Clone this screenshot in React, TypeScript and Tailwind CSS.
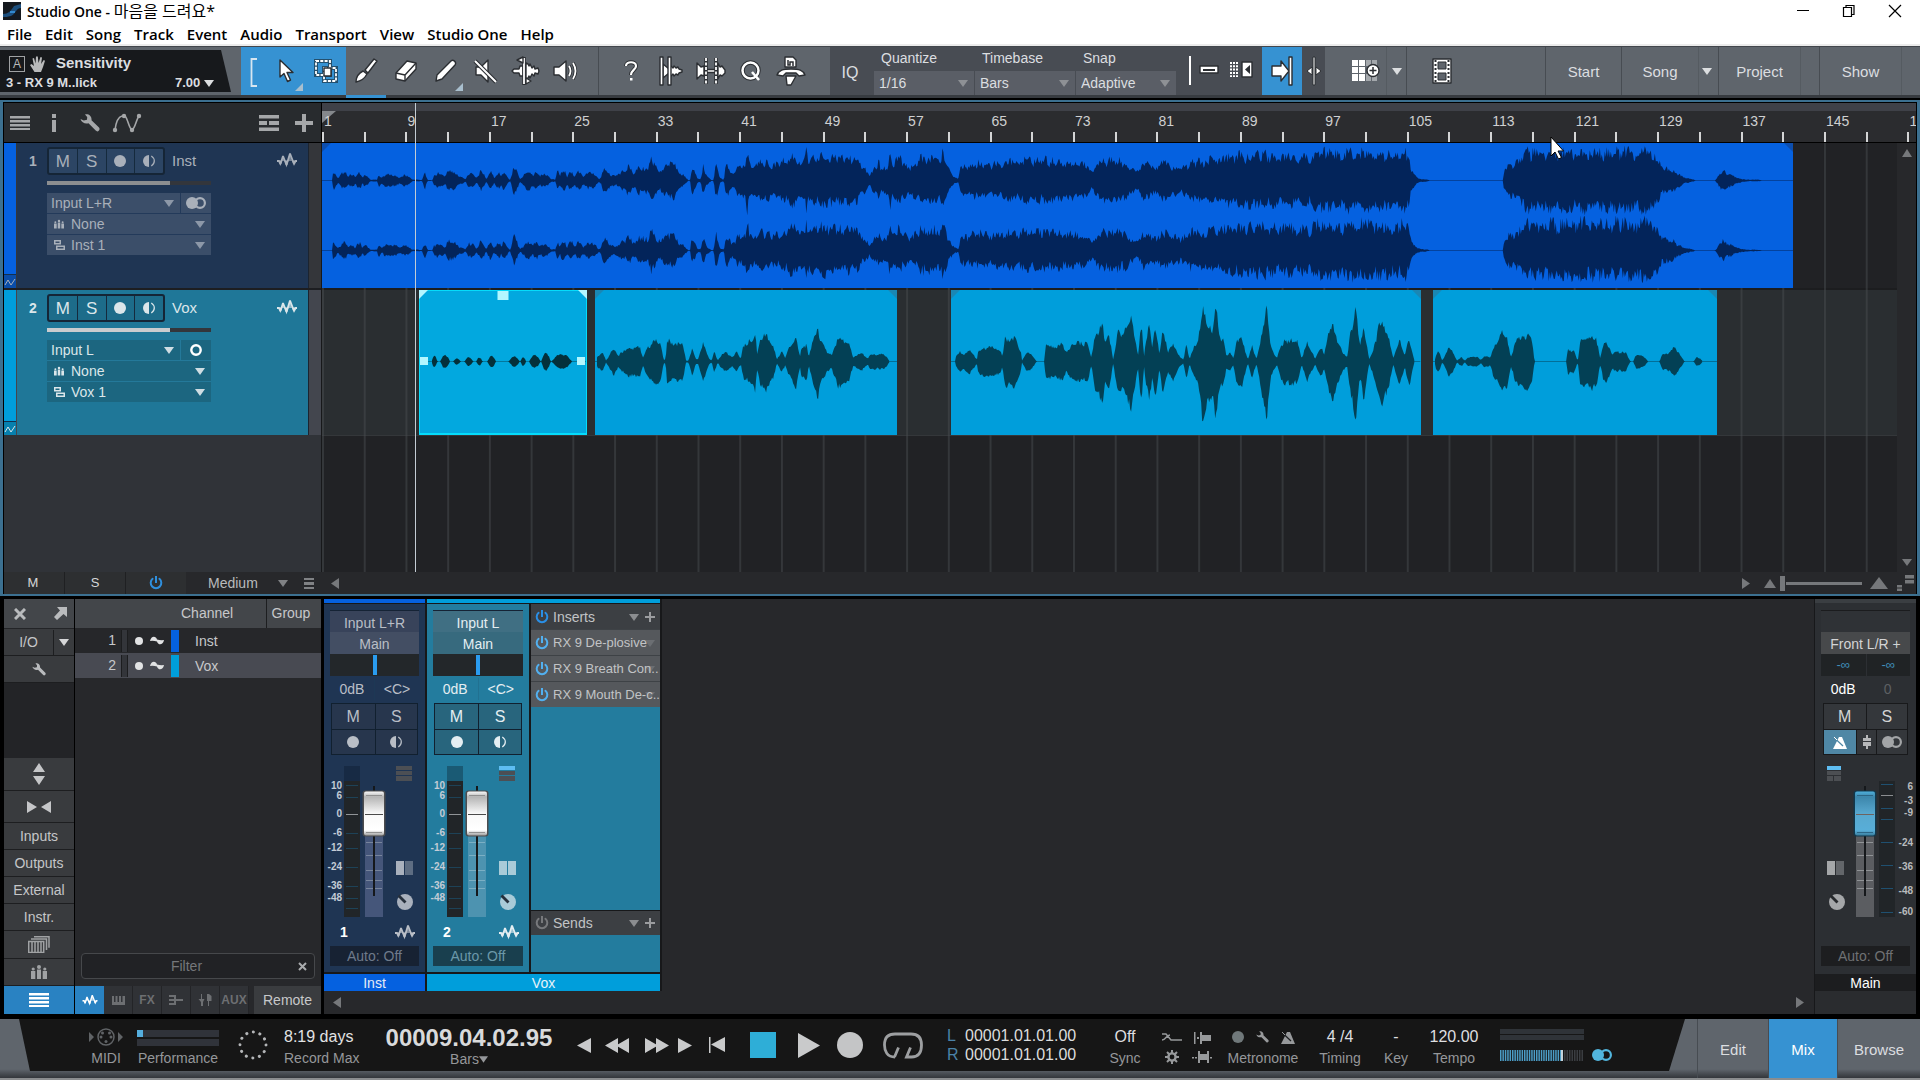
import React from "react";

/* ------------------------------------------------------------------ */
/* Timeline data                                                       */
/* ------------------------------------------------------------------ */

type Point = [number, number];
type Blob = [number, number, number];

const TIMELINE = 1574;
const BARS = 151;
const pct = (v: number) => `${(v / TIMELINE) * 100}%`;
const barPct = (bar: number) => `${((bar - 1) / BARS) * 100}%`;

const mapPoints = (pts: number[], scale: number, shift: number): Point[] => {
  const out: Point[] = [];
  for (let i = 0; i < pts.length; i += 2) out.push([pts[i] / scale + shift, pts[i + 1]]);
  return out;
};

const INST_A = [
  0, 0, 25, 0, 27, 11, 40, 7, 55, 11, 65, 6, 80, 9, 90, 8, 107, 1, 118, 1, 121, 9, 150, 6, 170, 8, 195, 1, 210, 1, 216, 10, 222, 1, 232, 0,
  238, 13, 248, 6, 262, 12, 290, 9, 300, 1, 306, 9, 322, 6, 332, 12, 342, 4, 350, 11, 362, 6, 376, 12, 392, 2, 400, 17, 412, 5, 430, 11,
  440, 6, 447, 16, 460, 8, 485, 1, 490, 12, 510, 10, 540, 10, 570, 8, 575, 3, 585, 16, 600, 6, 620, 9, 635, 18, 650, 9, 657, 20, 670, 13,
  682, 26, 695, 16, 715, 17, 730, 22, 742, 11, 755, 3, 760, 0, 763, 0, 766, 19, 778, 3, 785, 2, 790, 17, 800, 4, 808, 0, 812, 2, 816, 22,
  824, 4, 833, 1, 836, 21, 850, 8, 857, 10, 859, 23, 870, 20, 877, 20, 881, 36, 885, 20, 905, 21, 915, 24, 935, 19, 950, 22, 962, 26,
  970, 29, 985, 26, 1000, 25, 1003, 35, 1007, 24, 1020, 29, 1035, 31, 1060, 28, 1080, 27, 1100, 29, 1115, 20, 1125, 13, 1133, 6,
  1145, 17, 1149, 16, 1152, 31, 1156, 14, 1172, 16, 1175, 34, 1179, 20, 1195, 29, 1210, 16, 1225, 19, 1240, 28, 1260, 26, 1270, 28,
  1278, 27, 1284, 37, 1290, 22, 1300, 9, 1308, 4, 1317, 3, 1320, 16, 1340, 19, 1355, 22, 1380, 19, 1400, 21, 1425, 23, 1450, 24,
  1475, 25, 1500, 25, 1520, 23, 1540, 20, 1566, 23,
];
const INST_B = [
  0, 24, 12, 20, 25, 12, 38, 23, 50, 16, 58, 9, 65, 21, 80, 24, 100, 25, 120, 22, 138, 10, 150, 23, 170, 16, 185, 23, 200, 19, 220, 15,
  240, 24, 265, 23, 280, 27, 300, 27, 320, 31, 345, 30, 370, 32, 390, 29, 410, 30, 430, 29, 455, 27, 465, 35, 475, 36, 500, 34, 510, 31,
  530, 36, 560, 35, 590, 34, 610, 32, 630, 36, 634, 35, 638, 14, 645, 7, 655, 2, 670, 1, 672, 0, 806, 0, 808, 10, 815, 18, 822, 21,
  835, 23, 845, 34, 860, 36, 880, 35, 920, 34, 950, 36, 980, 34, 1010, 36, 1050, 35, 1080, 36, 1090, 22, 1100, 15, 1118, 12, 1130, 6,
  1140, 3, 1155, 1, 1156, 0, 1192, 0, 1200, 7, 1208, 13, 1218, 8, 1235, 3, 1250, 1, 1275, 1, 1277, 0, 1335, 0,
];
const INST: Point[] = [...mapPoints(INST_A, 2.063, -2), ...mapPoints(INST_B, 1.823, 738)];

const VOX1_BLOBS: Blob[] = [
  [230, 242, 7], [248, 268, 8], [275, 290, 4], [298, 316, 5], [322, 335, 5], [345, 363, 7],
  [389, 412, 6], [413, 425, 5], [431, 455, 8], [456, 476, 10], [477, 520, 9],
];
const VOX1: Point[] = VOX1_BLOBS.flatMap(([a, b, h]): Point[] => {
  const x = (v: number) => v / 2.063 - 99;
  const w = b - a;
  return [[x(a), 0], [x(a + w * 0.3), h * 0.8], [x(a + w * 0.5), h], [x(a + w * 0.8), h * 0.6], [x(b), 0]];
});
const VOX2 = mapPoints(
  [
    570, 0, 572, 6, 583, 11, 590, 1, 600, 10, 607, 15, 616, 5, 622, 11, 640, 16, 660, 16, 666, 4, 675, 17, 690, 24, 703, 20, 709, 2, 713, 3,
    716, 24, 735, 19, 748, 21, 755, 1, 760, 1, 768, 15, 775, 3, 780, 3, 790, 20, 803, 3, 808, 1, 813, 12, 820, 1, 828, 7, 838, 11, 850, 5,
    860, 11, 868, 3, 873, 17, 885, 23, 890, 22, 897, 37, 902, 6, 908, 28, 920, 30, 935, 19, 942, 2, 952, 11, 960, 4, 965, 15, 982, 27,
    990, 5, 993, 18, 1004, 18, 1008, 4, 1015, 22, 1027, 38, 1035, 20, 1048, 10, 1055, 7, 1068, 28, 1080, 22, 1090, 24, 1100, 4, 1115, 10,
    1130, 4, 1135, 8, 1165, 8, 1175, 0,
  ],
  2.063,
  -275,
);
const VOX3: Point[] = [
  ...mapPoints(
    [
      1310, 0, 1312, 5, 1320, 12, 1328, 7, 1338, 14, 1350, 6, 1355, 2, 1358, 14, 1375, 15, 1390, 17, 1403, 14, 1408, 4, 1412, 25, 1435, 26,
      1446, 10, 1448, 1, 1458, 11, 1470, 7, 1478, 0, 1494, 0, 1497, 18, 1510, 17, 1530, 20, 1540, 10, 1550, 19, 1562, 21,
    ],
    2.063,
    -631,
  ),
  ...mapPoints(
    [
      0, 20, 10, 2, 15, 13, 25, 22, 40, 20, 50, 22, 57, 5, 65, 32, 77, 42, 82, 24, 88, 34, 97, 1, 105, 37, 113, 30, 120, 36, 130, 52,
      138, 24, 142, 8, 148, 42, 153, 6, 162, 46, 168, 16, 174, 43, 181, 6, 188, 39, 196, 10, 205, 22, 215, 8, 225, 2, 230, 19, 236, 2,
      245, 20, 252, 26, 260, 64, 268, 40, 278, 40, 284, 62, 290, 28, 298, 26, 303, 6, 310, 11, 316, 3, 322, 26, 332, 26, 342, 2, 350, 17,
      358, 3, 365, 24, 376, 60, 384, 16, 395, 4, 402, 17, 410, 24, 432, 24, 440, 4, 450, 21, 465, 3, 475, 18, 481, 8, 488, 28, 496, 47,
      505, 26, 515, 10, 523, 5, 530, 38, 538, 62, 546, 18, 553, 40, 563, 3, 570, 12, 580, 38, 588, 46, 600, 24, 607, 4, 618, 26, 628, 6,
      636, 26, 642, 10, 646, 0,
    ],
    1.823,
    109,
  ),
];
const VOX4 = mapPoints(
  [
    681, 0, 683, 6, 688, 14, 695, 1, 700, 6, 708, 19, 718, 6, 722, 1, 730, 5, 736, 1, 742, 5, 760, 5, 765, 2, 772, 6, 783, 5, 788, 15,
    797, 23, 803, 33, 812, 29, 820, 5, 828, 22, 838, 27, 850, 33, 858, 26, 863, 0, 921, 0, 924, 15, 935, 11, 942, 1, 946, 22, 956, 27,
    964, 31, 976, 24, 983, 3, 988, 19, 994, 24, 1005, 8, 1015, 11, 1030, 10, 1038, 0, 1043, 0, 1048, 8, 1062, 6, 1070, 0, 1091, 0,
    1096, 9, 1110, 11, 1118, 16, 1124, 11, 1135, 2, 1136, 0, 1153, 0, 1158, 5, 1166, 3, 1170, 0,
  ],
  1.823,
  -372,
);

const noise = (i: number) => {
  const v = Math.sin(i * 127.1) * 43758.5453;
  return v - Math.floor(v);
};

const pulse = (x: number, seed: number, depth: number) =>
  1 - depth * Math.pow(Math.abs(Math.cos(x / 3.4 + Math.sin(x / 11 + seed) * 1.6)), 5);

function wavePath(points: Point[], center: number, seed: number, rough: number, down: number, depth: (x: number) => number) {
  const top: string[] = [];
  const bottom: string[] = [];
  const last = points[points.length - 1][0];
  let k = 0;
  for (let x = Math.ceil(points[0][0]); x <= last; x += 1) {
    while (k < points.length - 2 && points[k + 1][0] < x) k += 1;
    const [x0, y0] = points[k];
    const [x1, y1] = points[k + 1];
    const t = x1 === x0 ? 1 : Math.min(1, Math.max(0, (x - x0) / (x1 - x0)));
    const amp = (y0 + (y1 - y0) * t) * pulse(x, seed, depth(x));
    const up = Math.min(35, amp * (1 - rough * noise(x + seed)) + (rough < 0.2 ? amp : 0) * 0);
    const dn = Math.min(35, amp * down * (1 - rough * noise(x * 1.7 + seed)));
    const cap = rough < 0.25;
    const u = cap ? amp * (1 - rough * noise(x + seed)) : up;
    const d = cap ? amp * down * (1 - rough * noise(x * 1.7 + seed)) : dn;
    top.push(`${x} ${(center - u).toFixed(1)}`);
    bottom.unshift(`${x} ${(center + d).toFixed(1)}`);
  }
  return `M${top.join("L")}L${bottom.join("L")}Z`;
}

const instDepth = (x: number) => (x < 280 ? 0.55 : x < 412 ? 0.3 : 0.2);
const voxDepth = () => 0.12;

/* ------------------------------------------------------------------ */
/* Icons                                                               */
/* ------------------------------------------------------------------ */

type IconProps = { className?: string };

const Svg = ({ w, h, className = "", children }: { w: number; h: number; className?: string; children: React.ReactNode }) => (
  <svg width={w} height={h} viewBox={`0 0 ${w} ${h}`} className={`shrink-0 ${className}`} fill="currentColor" aria-hidden="true">
    {children}
  </svg>
);

const Down = ({ className = "" }: IconProps) => (
  <Svg w={10} h={7} className={className}><path d="M0 0h10L5 7z" /></Svg>
);
const Left = ({ className = "" }: IconProps) => (
  <Svg w={8} h={11} className={className}><path d="M8 0v11L0 5.500z" /></Svg>
);
const Right = ({ className = "" }: IconProps) => (
  <Svg w={8} h={11} className={className}><path d="M0 0v11l8-5.500z" /></Svg>
);
const Up = ({ className = "" }: IconProps) => (
  <Svg w={10} h={8} className={className}><path d="M0 8h10L5 0z" /></Svg>
);
const Lines = ({ className = "" }: IconProps) => (
  <Svg w={20} h={14} className={className}><path d="M0 0h20v2.500H0zM0 4h20v2.500H0zM0 8h20v2.500H0zM0 12h20v2H0z" /></Svg>
);
const Wrench = ({ className = "" }: IconProps) => (
  <Svg w={20} h={18} className={className}>
    <path d="M5 .500C8.500-.600 12 2 11.500 6.200L19 13.500c1 1.200.500 2.500-.300 3.300s-2 .900-3-.200L8.500 9.300C5 10.300 1.500 8.500.500 5l3.300 1.500L7 5.800 7.200 3z" />
  </Svg>
);
const WaveIcon = ({ className = "" }: IconProps) => (
  <Svg w={20} h={16} className={className}>
    <path d="M0 9h2l1.500 3L6 4l3.500 9L13 1.500 17 12l1.500-3H20" fill="none" stroke="currentColor" strokeWidth="1.800" strokeLinejoin="bevel" />
    <path d="M1.500 8.500h3.800L3.300 14zM7.500 8.500h4L9.500 15.500zM15 8.500h4L17 14z" />
    <path d="M4.500 9 6 4l2 5zM11 9l2-8 2 8z" opacity="0.6" />
  </Svg>
);
const Power = ({ className = "" }: IconProps) => (
  <Svg w={14} h={14} className={className}>
    <path d="M3.600 2.800a5.300 5.300 0 1 0 6.800 0" fill="none" stroke="currentColor" strokeWidth="2" strokeLinecap="round" />
    <path d="M6 0h2v7H6z" />
  </Svg>
);
const Mono = ({ className = "" }: IconProps) => (
  <Svg w={12} h={12} className={className}>
    <path d="M6 0v12A6 6 0 0 1 6 0z" />
    <path d="M8.300 1q3 2 3 5t-3 5" fill="none" stroke="currentColor" strokeWidth="1.300" />
  </Svg>
);
const Stereo = ({ className = "" }: IconProps) => (
  <Svg w={20} h={12} className={className}>
    <circle cx="6" cy="6" r="6" />
    <circle cx="14" cy="6" r="4.900" fill="none" stroke="currentColor" strokeWidth="2.200" />
  </Svg>
);
const People = ({ className = "" }: IconProps) => (
  <Svg w={16} h={14} className={className}>
    <path d="M6 4.500h4V14H6zM0 6h4.300v8H0zM11.700 6H16v8h-4.300z" />
    <circle cx="8" cy="2" r="2" /><circle cx="2.200" cy="4" r="1.600" /><circle cx="13.800" cy="4" r="1.600" />
  </Svg>
);
const Layers = () => (
  <Svg w={11} h={10}>
    <path d="M.750.750h5.500v3H.750zM2.750 6.250h7.500v3h-7.500z" fill="none" stroke="currentColor" strokeWidth="1.500" />
  </Svg>
);
const Curve = () => (
  <Svg w={12} h={8}><path d="M1 7 4 2l3 5 4-6" fill="none" stroke="currentColor" /></Svg>
);
const Plus = ({ className = "" }: IconProps) => (
  <Svg w={10} h={10} className={className}><path d="M4 0h2v4h4v2H6v4H4V6H0V4h4z" /></Svg>
);
const Sine = () => (
  <Svg w={14} h={9}><path d="M0 5C1-.500 6-.500 7 3.500q3.500 1 7 .500c-1 5.500-6 5.500-7 1.500Q3.500 4.500 0 5z" /></Svg>
);
const Metro = ({ className = "", line = "#1b1d1f" }: IconProps & { line?: string }) => (
  <Svg w={14} h={13} className={className}>
    <path d="M6 1h3l5 12H0z" /><path d="M2 2.500 10 10" stroke={line} strokeWidth="1.200" /><path d="M1 1l3 3" stroke="currentColor" />
  </Svg>
);

const edge = { fill: "#fff", stroke: "#2b2e32", strokeWidth: 1.4, strokeLinejoin: "round" as const };

const toolIcons: Record<string, React.ReactNode> = {
  Arrow: <Svg w={18} h={24}><path {...edge} d="M3 1v17l4-3.500 3.500 8 3-1.500L10 13.500h6z" /></Svg>,
  Range: (
    <Svg w={26} h={26}>
      <path d="M3 3h14v14H3zM11 10h12v13H11z" fill="none" stroke="#24506e" strokeWidth="4" />
      <path d="M3 3h14v14H3z" fill="none" stroke="#fff" strokeWidth="1.800" strokeDasharray="3 1.300" />
      <path d="M11 10h12v13H11z" fill="none" stroke="#fff" strokeWidth="1.800" strokeDasharray="3 1.300" />
      <path {...edge} d="M11 10h7v8h-7z" />
    </Svg>
  ),
  Split: <Svg w={24} h={26}><path {...edge} d="M2 24c0-5 3-9 7-11l4 3c-2 4-6 7-11 8zM11 12 20 1l3 2-9 12z" /></Svg>,
  Erase: (
    <Svg w={24} h={24}>
      <path {...edge} d="M2 14 13 2l9 2v6L11 22l-9-2z" /><path {...edge} fill="none" d="M2 14l9 2L22 4M11 16v6" />
    </Svg>
  ),
  Paint: <Svg w={24} h={24}><path {...edge} d="M2 22l1-6L17 2c2-2 6 1 4 4L8 20z" /></Svg>,
  Mute: (
    <Svg w={26} h={26}>
      <path {...edge} d="M3 9h5l7-7v22l-7-7H3z" /><path d="M2 3l21 21" stroke="#2b2e32" strokeWidth="4" /><path d="M2 3l21 21" stroke="#fff" strokeWidth="2" />
    </Svg>
  ),
  Bend: (
    <Svg w={30} h={30}>
      <path {...edge} d="M1 15l2-2h5l1-3h3v10H9l-1-3H3zM15 7l2 1 1 2 1-2 2 4 2-2 1 3 3-1 1 3-1 3-3-1-1 3-2-2-2 4-1-2-1 2-2 1z" />
      <path d="M13 1v28" stroke="#2b2e32" strokeWidth="3.500" /><path d="M13 2v26" stroke="#fff" strokeWidth="1.800" />
      <path {...edge} d="M12 1v6L6 4zM15 22v6l5-3z" />
    </Svg>
  ),
  Listen: (
    <Svg w={26} h={24}>
      <path {...edge} d="M1 8h5l7-6v20l-7-6H1z" /><path d="M16 7q3 5 0 10M20 4q5 8 0 16" fill="none" stroke="#2b2e32" strokeWidth="3.500" />
      <path d="M16 7q3 5 0 10M20 4q5 8 0 16" fill="none" stroke="#fff" strokeWidth="1.800" />
    </Svg>
  ),
  Help: (
    <Svg w={16} h={22}>
      <path d="M3 6c0-5 10-5 10 0 0 4-5 4-5 9" fill="none" stroke="#2b2e32" strokeWidth="4" />
      <path d="M3 6c0-5 10-5 10 0 0 4-5 4-5 9" fill="none" stroke="#fff" strokeWidth="2.200" /><path fill="#fff" d="M7 18h2.500v2.500H7z" />
    </Svg>
  ),
  Strip: (
    <Svg w={24} h={30}>
      <path {...edge} d="M4 8l6 5 2-3 2 2 1-2 2 2 2-1 1 2 3 1v2l-3 1-1 2-2-1-2 2-1-2-2 2-2-3-6 5z" />
      <path {...edge} d="M1 1h3v28H1zM9 1h3v28H9z" />
    </Svg>
  ),
  Stretch: (
    <Svg w={30} h={28}>
      <path {...edge} d="M1 6l3 3 1 1 3-1v10l-3-1-1 1-3 3zM22 6l2 4 2-1 3 4v3l-3 3-2-1-2 4zM9 12.500h12v3H9z" />
      <path d="M10 1v26M20 1v26" stroke="#2b2e32" strokeWidth="3.500" /><path d="M10 1v26M20 1v26" stroke="#fff" strokeWidth="1.800" strokeDasharray="3 1.500" />
    </Svg>
  ),
  Quant: (
    <Svg w={22} h={22}>
      <circle cx="10.500" cy="10.500" r="8" fill="none" stroke="#2b2e32" strokeWidth="4.500" />
      <circle cx="10.500" cy="10.500" r="8" fill="none" stroke="#fff" strokeWidth="2.500" />
      <path d="M12 12l7 8" stroke="#fff" strokeWidth="2.500" />
    </Svg>
  ),
  Macro: (
    <Svg w={30} h={30}>
      <path {...edge} d="M9 1h8l3 3v7H9zM1 19c2-5 6-6 14-6s12 1 14 6l-6 1-3-3H10l-3 3zM10 20h10l-5 9h-4z" />
      <path d="M12 4v5h2V6h3v4" fill="none" stroke="#2b2e32" strokeWidth="1.500" />
    </Svg>
  ),
};

/* ------------------------------------------------------------------ */
/* Top area                                                            */
/* ------------------------------------------------------------------ */

const menus = ["File", "Edit", "Song", "Track", "Event", "Audio", "Transport", "View", "Studio One", "Help"];

function TitleBar() {
  return (
    <header className="border-b-2 border-[#ececec] bg-white font-['Open_Sans','Noto_Sans_CJK_KR',sans-serif] text-black">
      <div className="flex h-[22px] items-center pl-[3px] text-[14px] leading-[22px] font-semibold">
        <Svg w={18} h={18} className="mr-[6px]">
          <rect width="18" height="18" fill="#15191f" /><path d="M0 12c5 0 8-3 11-8l7-2v4c-5 0-6 7-10 8s-5 1-8 1z" fill="#1c4f7e" />
          <path d="M7 10h5" stroke="#3a9be8" strokeWidth="1.500" />
        </Svg>
        <h1 className="flex-1">Studio One - <span className="text-[16px] font-normal">마음을 드려요*</span></h1>
        <div className="flex pr-[18px]">
          <button aria-label="Minimize" className="mr-[32px]"><Svg w={14} h={14}><path d="M1 6h12v1H1z" /></Svg></button>
          <button aria-label="Restore" className="mr-[32px]">
            <Svg w={14} h={14}><path d="M1.500 3.500h8v9h-8zM4 3V1.500h8v9h-2" fill="none" stroke="currentColor" strokeWidth="1.200" /></Svg>
          </button>
          <button aria-label="Close"><Svg w={14} h={14}><path d="M1 1l12 12M13 1 1 13" stroke="currentColor" strokeWidth="1.200" /></Svg></button>
        </div>
      </div>
      <nav className="flex h-[22px] gap-[13px] pl-[7px] text-[15px] leading-[24px] font-semibold">
        {menus.map((m) => <button key={m}>{m}</button>)}
      </nav>
    </header>
  );
}

const Tool = ({ name, active = false, children }: { name: string; active?: boolean; children?: React.ReactNode }) => (
  <button aria-label={name} className={`relative grid w-10 shrink-0 place-items-center ${active ? "bg-[#3692d2]" : ""}`}>
    {toolIcons[name]}
    {children}
  </button>
);

const Corner = () => (
  <Svg w={8} h={8} className="absolute right-[3px] bottom-[4px] text-[#a9bfce]"><path d="M8 0v8H0z" /></Svg>
);

const snapFields = [["Quantize", "1/16"], ["Timebase", "Bars"], ["Snap", "Adaptive"]];

function Toolbar() {
  const sep = "border-l border-[#474c52]";
  return (
    <div className="flex h-[52px] shrink-0 border-t border-b-[3px] border-t-[#42464c] border-b-[#373b40] bg-[#5f656c] text-[15px] text-[#dcdee0]">
      <section aria-label="Parameter" className="mt-[3px] mb-[3px] flex w-[231px] shrink-0 flex-col justify-between bg-[#17191c] pt-[2px] [clip-path:polygon(0_0,221px_0,231px_100%,0_100%)]">
        <div className="flex h-[24px] items-center pl-[9px] text-[15px] font-bold">
          <span className="mr-[5px] grid size-[16px] place-items-center border border-[#9fa1a3] text-[12px] leading-none font-normal text-[#b9babb]">A</span>
          <Svg w={16} h={16} className="mr-[10px] text-[#b9babb]">
            <path d="M4.500 16 0 9l1.500-1L4 10 2.500 2.500 4 2l1.500 5.500L6 .500h1.800l.700 6.500L10.500 1l1.500.500-.900 6.500 2.600-4 1.300.700L13 11l-2 5z" />
          </Svg>
          Sensitivity
        </div>
        <div className="flex items-center pb-px pl-[6px] text-[13px] leading-[16px] font-bold">
          <span className="w-[169px]">3 - RX 9 M..lick</span>
          <span>7.00</span><Down className="ml-[4px]" />
        </div>
      </section>
      <div className="ml-[10px] flex w-[25px] shrink-0 justify-center bg-[#3692d2] pt-[11px]">
        <Svg w={7} h={29}><path d="M7 1H1.500v27H7" fill="none" stroke="#d8e6f0" strokeWidth="1.800" /></Svg>
      </div>
      <Tool name="Arrow" active><Corner /></Tool>
      <Tool name="Range" active />
      <Tool name="Split"><span className="absolute inset-x-0 -bottom-[3px] h-[3px] bg-[#3692d2]" /></Tool>
      <Tool name="Erase" />
      <Tool name="Paint"><Corner /></Tool>
      <Tool name="Mute" />
      <Tool name="Bend" />
      <Tool name="Listen" />
      <div className={`ml-[12px] flex pr-[19px] pl-[12px] ${sep}`}>
        <Tool name="Help" /><Tool name="Strip" /><Tool name="Stretch" /><Tool name="Quant" /><Tool name="Macro" />
      </div>
      <div className="flex shrink-0 bg-[#484c53]">
        <button className="w-[44px] pt-[4px] pr-[4px] text-[16px]">IQ</button>
        {snapFields.map(([label, value]) => (
          <label key={label} className="flex w-[101px] flex-col text-[14px]">
            <span className="h-[24px] pl-[7px] leading-[23px]">{label}</span>
            <span className="relative flex h-[24px] items-center border-r border-[#484c53] bg-[#5a5e66]">
              <select className="h-full w-full appearance-none bg-transparent pl-[5px] outline-none"><option>{value}</option></select>
              <Down className="pointer-events-none absolute right-[6px] text-[#8e9195]" />
            </span>
          </label>
        ))}
        <div className="flex items-center gap-[8px] pr-[8px] pb-[2px] pl-[12px]">
          <span className="h-[29px] w-[2px] bg-white" />
          <button aria-label="Snap range"><Svg w={20} h={10}><path {...edge} d="M1 1h18v7H1z" /><path fill="#2b2e32" d="M4 4h12v2H4z" /></Svg></button>
          <button aria-label="Cursor follows" className="ml-[3px]">
            <Svg w={24} h={18}>
              <path {...edge} d="M12 1h10v15H12z" /><path fill="#2b2e32" d="M20 4v9l-5-4.500z" />
              <path d="M1 1v15M4 1v15M7 1v15" stroke="#fff" strokeWidth="2" strokeDasharray="2 1.300" />
            </Svg>
          </button>
        </div>
        <button aria-label="Autoscroll" className="grid w-[40px] place-items-center bg-[#3692d2]">
          <Svg w={24} h={30}><path {...edge} d="M2 10h9V5l8 10-8 10v-5H2z" /><path {...edge} d="M19 1h3v28h-3z" /></Svg>
        </button>
        <button aria-label="Edit cursor" className="grid w-[23px] place-items-center">
          <Svg w={16} h={30}><path {...edge} strokeWidth="1" d="M7 1h2v28H7zM6 11v8l-5-4zM10 11v8l5-4z" /></Svg>
        </button>
      </div>
      <button aria-label="Macro grid" className="grid w-[61px] place-items-center pl-[20px]">
        <Svg w={30} h={24}>
          <path fill="#fff" d="M1 1h6v6H1zM8 1h6v6H8zM1 8h6v6H1zM8 8h6v6H8zM1 15h6v7H1zM8 15h6v7H8z" />
          <path fill="#a4a8ac" d="M15 1h5v6h-5zM21 1h5v6h-5zM15 15h5v7h-5zM21 15h5v7h-5z" />
          <circle cx="22" cy="11.500" r="6" {...edge} /><path d="M18.500 11.500h7M22 8v7" stroke="#2b2e32" strokeWidth="1.500" />
        </Svg>
      </button>
      <button aria-label="Grid menu" className="grid w-[20px] place-items-center border-l border-[#555b61]"><Down /></button>
      <button aria-label="Video" className={`grid w-[70px] place-items-center ${sep}`}>
        <Svg w={20} h={26}>
          <path {...edge} d="M1 1h18v24H1z" /><path fill="#5f656c" stroke="#2b2e32" d="M6 4h8v7H6zM6 15h8v7H6z" />
          <path d="M3.500 2v22M16.500 2v22" stroke="#2b2e32" strokeWidth="2" strokeDasharray="2 2" />
        </Svg>
      </button>
      <div className="flex-1" />
      <button className={`w-[76px] pt-[3px] ${sep}`}>Start</button>
      <button className={`w-[77px] pt-[3px] ${sep}`}>Song</button>
      <button aria-label="Song list" className="grid w-[20px] place-items-center border-l border-[#555b61] pr-[3px]"><Down /></button>
      <button className={`w-[82px] pt-[3px] ${sep}`}>Project</button>
      <span className="w-[19px] border-l border-[#555b61]" />
      <button className={`w-[82px] pt-[3px] ${sep}`}>Show</button>
      <span className="w-[19px] border-l border-[#555b61]" />
    </div>
  );
}

/* ------------------------------------------------------------------ */
/* Arrangement                                                         */
/* ------------------------------------------------------------------ */

const trackStyles = {
  inst: { strip: "bg-[#0561e0]", foot: "bg-[#0a4da8]", body: "bg-[#1f3553]", btn: "bg-[#2c4564]", field: "bg-[#3b4e69]", gap: "border-[#233a5a]", text: "text-[#a9b0ba]", bar: "bg-[#8c8e90]", arrow: "text-[#8d98a8]", side: "bg-[#34363a]" },
  vox: { strip: "bg-[#009edb]", foot: "bg-[#0780ae]", body: "bg-[#1f7798]", btn: "bg-[#1d6c8a]", field: "bg-[#1c6680]", gap: "border-[#24799a]", text: "text-[#dbe6ea]", bar: "bg-[#c9cccf]", arrow: "text-[#cfdde3]", side: "bg-[#43464e]" },
};

type TrackProps = { no: number; name: string; input: string; kind: "inst" | "vox"; stereo?: boolean };

function TrackHeader({ no, name, input, kind, stereo = false }: TrackProps) {
  const s = trackStyles[kind];
  const row = `relative flex items-center border-t ${s.gap} ${s.field}`;
  const arrow = `pointer-events-none absolute right-[6px] ${s.arrow}`;
  return (
    <div className={`mb-[2px] flex h-[145px] ${s.side} ${s.text}`}>
      <div className={`flex w-[12px] flex-col justify-end ${s.strip}`}>
        <span className={`grid h-[14px] place-items-center border-t border-[#12304f] ${s.foot}`}><Curve /></span>
      </div>
      <div className={`ml-px flex w-[292px] border-r border-[#1c2430] ${s.body}`}>
        <span className="w-[30px] pt-[8px] pl-[12px] text-[14px] leading-[20px] font-bold">{no}</span>
        <div className="w-[164px]">
          <div className="mt-[3px] flex items-center">
            <div className={`flex h-[28px] w-[118px] rounded-[3px] border-2 border-[#152536] text-[17px] [&>*]:grid [&>*]:flex-1 [&>*]:place-items-center [&>*+*]:border-l [&>*+*]:border-[#152a3d] ${s.btn}`}>
              <button>M</button><button>S</button>
              <button aria-label="Record"><Svg w={12} h={12}><circle cx="6" cy="6" r="6" /></Svg></button>
              <button aria-label="Monitor"><Mono /></button>
            </div>
            <span className="ml-[7px] pt-px text-[15px] leading-[28px]">{name}</span>
          </div>
          <div className="mt-[6px] h-[4px] bg-[#33363c]"><div className={`h-full w-3/4 ${s.bar}`} /></div>
          <div className="mt-[8px] text-[14px]">
            <div className="flex h-[20px]">
              <label className={`relative flex flex-1 items-center ${s.field}`}>
                <select aria-label={`${name} input`} className="w-full appearance-none bg-transparent pl-[4px] outline-none"><option>{input}</option></select>
                <Down className={arrow} />
              </label>
              <button aria-label="Channel mode" className={`grid w-[31px] place-items-center border-l ${s.gap} ${s.field}`}>
                {stereo ? <Stereo /> : <Svg w={12} h={12}><circle cx="6" cy="6" r="4.700" fill="none" stroke="#fff" strokeWidth="2.400" /></Svg>}
              </button>
            </div>
            <label className={`h-[21px] pl-[7px] ${row}`}>
              <People className="w-[10px]" />
              <select aria-label={`${name} instrument`} className="w-full appearance-none bg-transparent pl-[7px] outline-none"><option>None</option></select>
              <Down className={arrow} />
            </label>
            <label className={`h-[21px] pl-[7px] ${row}`}>
              <Layers />
              <select aria-label={`${name} layer`} className="w-full appearance-none bg-transparent pl-[6px] outline-none"><option>{`${name} 1`}</option></select>
              <Down className={arrow} />
            </label>
          </div>
        </div>
        <WaveIcon className="mt-[9px] mr-[11px] ml-auto" />
      </div>
    </div>
  );
}

type ClipProps = { start: number; end: number; className: string; children: React.ReactNode };
const Clip = ({ start, end, className, children }: ClipProps) => (
  <div className={`absolute inset-y-0 ${className}`} style={{ left: pct(start), width: pct(end - start) }}>
    {children}
  </div>
);

const Fade = ({ className, flip = false }: { className: string; flip?: boolean }) => (
  <Svg w={9} h={9} className={`absolute top-0 ${flip ? "right-0" : "left-0"} ${className}`}><path d={flip ? "M0 0h9v9z" : "M0 0h9L0 9z"} /></Svg>
);

const voxClips = [
  { start: 273, end: 575, wave: VOX2, seed: 11 },
  { start: 629, end: 1098, wave: VOX3, seed: 31 },
  { start: 1110, end: 1394, wave: VOX4, seed: 57 },
];

const Wave = ({ width, fill, children }: { width: number; fill: string; children: React.ReactNode }) => (
  <svg viewBox={`0 0 ${width} 145`} preserveAspectRatio="none" className="absolute inset-0 h-full w-full" fill={fill} aria-hidden="true">
    {children}
  </svg>
);

function GridLines() {
  return (
    <svg className="absolute inset-0 h-full w-full" aria-hidden="true">
      {Array.from({ length: 38 }, (_, i) => (
        <rect key={i} x={barPct(1 + i * 4)} width="2" height="100%" fill="#484b4f" fillOpacity="0.5" />
      ))}
    </svg>
  );
}

function Timeline() {
  return (
    <div className="relative min-w-0 flex-1">
      <div className="relative mr-[19px] flex h-full flex-col bg-[#212225]">
        <div className="h-[145px] shrink-0" />
        <div className="h-[2px] shrink-0 bg-[#1c1d1f]" />
        <div className="h-[145px] shrink-0 bg-[#2a2e31]" />
        <div className="h-px shrink-0 bg-[#34373a]" />
        <GridLines />
        <div className="absolute inset-x-0 top-0 h-[145px]">
          <Clip start={0} end={1470} className="bg-[#0561e0]">
            <Wave width={1470} fill="#03245a">
              <path d="M0 37h1470v1H0zM0 107h1470v1H0z" opacity="0.5" />
              <path d={wavePath(INST, 37.5, 3, 0.36, 1, instDepth)} /><path d={wavePath(INST, 107.5, 47, 0.44, 0.96, instDepth)} />
            </Wave>
            <Fade className="text-[#0d4eae]" /><Fade flip className="text-[#0d4eae]" />
          </Clip>
        </div>
        <div className="absolute inset-x-0 top-[147px] h-[145px]">
          <Clip start={97} end={265} className="bg-[#02a8df]">
            <Wave width={168} fill="#04303a">
              <path d="M0 71h168v1H0z" opacity="0.4" /><path d={wavePath(VOX1, 71.5, 5, 0.2, 1, voxDepth)} />
            </Wave>
            <div className="absolute inset-0 border border-b-2 border-[#05dcfb]" />
            <Fade className="text-[#b3f6ff]" /><Fade flip className="text-[#b3f6ff]" />
            <span className="absolute top-[1px] left-1/2 h-[9px] w-[11px] -translate-x-1/2 bg-[#b3f6ff]" />
            <span className="absolute top-[67px] left-[1px] size-[8px] bg-[#b3f6ff]" />
            <span className="absolute top-[67px] right-[2px] size-[8px] bg-[#b3f6ff]" />
          </Clip>
          {voxClips.map((c) => (
            <Clip key={c.start} start={c.start} end={c.end} className="bg-[#009edb]">
              <Wave width={c.end - c.start} fill="#034055">
                <path d={`M0 71h${c.end - c.start}v1H0z`} opacity="0.5" /><path d={wavePath(c.wave, 71.5, c.seed, 0.22, 1.06, voxDepth)} />
              </Wave>
              <Fade className="text-[#1a87b4]" /><Fade flip className="text-[#1a87b4]" />
            </Clip>
          ))}
        </div>
      </div>
      <div className="absolute inset-y-0 right-0 flex w-[19px] flex-col items-center justify-between bg-[#27282b] py-[6px] text-[#76787b]">
        <button aria-label="Scroll up"><Up /></button>
        <button aria-label="Scroll down"><Down /></button>
      </div>
    </div>
  );
}

function Ruler() {
  return (
    <div className="relative h-[40px] flex-1 overflow-hidden border-t-[8px] border-b border-t-[#3f4148] border-b-black bg-[#2b2c2f] text-[14px] text-[#cfd0d1]">
      <Svg w={14} h={12} className="absolute top-0 left-0 text-[#85888c]"><path d="M0 0h14L0 12z" /></Svg>
      <div className="relative mr-[19px] h-full">
        {Array.from({ length: 39 }, (_, i) => (
          <span key={i} className="absolute bottom-0 h-[10px] w-[2px] bg-[#d4d5d6]" style={{ left: barPct(1 + i * 4) }} />
        ))}
        {Array.from({ length: 20 }, (_, i) => (
          <span key={i} className="absolute top-[2px] pl-[2px] leading-[16px]" style={{ left: barPct(1 + i * 8) }}>{1 + i * 8}</span>
        ))}
      </div>
    </div>
  );
}

function Arrangement() {
  return (
    <main className="mt-[2px] flex min-h-[400px] flex-1 flex-col border-x-[3px] border-y-2 border-[#3c7090] bg-black">
      <div className="relative mx-px mt-px flex flex-1 flex-col">
        <div className="flex">
          <div className="flex h-[39px] w-[317px] shrink-0 items-center bg-[#282b2e] pt-px pl-[6px] text-[#a5a7a9]">
            <button aria-label="Track list" className="w-[41px]"><Lines /></button>
            <button aria-label="Inspector" className="w-[29px]">
              <Svg w={6} h={18}><path d="M1 6h4v12H1zM1 0h4v4H1z" /></Svg>
            </button>
            <button aria-label="Track tools" className="w-[32px]"><Wrench /></button>
            <button aria-label="Automation">
              <Svg w={30} h={20}>
                <path d="M3 17C4 9 6 4 10 3M13 3c3 3 4 13 7 14 3-1 4-10 7-14" fill="none" stroke="currentColor" strokeWidth="1.600" />
                <circle cx="3" cy="17" r="2.200" /><circle cx="12" cy="3" r="2.200" /><circle cx="20" cy="17" r="2.200" /><circle cx="27" cy="3" r="2.200" />
              </Svg>
            </button>
            <button aria-label="Track options" className="mr-[16px] ml-auto">
              <Svg w={20} h={16}><path d="M0 0h20v3.500H0zM0 6h8v4H0zM10 6h10v4H10zM0 12.500h20V16H0z" /></Svg>
            </button>
            <button aria-label="Add track" className="mr-[8px]"><Svg w={18} h={18}><path d="M7 0h4v7h7v4h-7v7H7v-7H0V7h7z" /></Svg></button>
          </div>
          <div className="w-px bg-black" />
          <Ruler />
        </div>
        <div className="flex flex-1">
          <div className="w-[317px] shrink-0 bg-[#303338]">
            <div className="bg-[#1d1e21]">
              <TrackHeader no={1} name="Inst" input="Input L+R" kind="inst" stereo />
              <TrackHeader no={2} name="Vox" input="Input L" kind="vox" />
            </div>
          </div>
          <div className="w-px bg-[#17181a]" />
          <Timeline />
        </div>
        <div className="flex h-[22px] items-center bg-[#27282b] text-[13px] text-[#d6d7d8]">
          <div className="flex h-full w-[318px] items-center">
            <button className="h-full w-[61px] border-r border-[#1f2022] bg-[#2d2f31] pr-[2px]">M</button>
            <button className="h-full w-[61px] border-r border-[#1f2022] bg-[#2d2f31]">S</button>
            <button aria-label="Enable" className="grid h-full w-[60px] place-items-center bg-[#2d2f31] text-[#2f8fdd]"><Power /></button>
            <label className="relative flex flex-1 items-center text-[#b9babc]">
              <select aria-label="Track height" className="w-full appearance-none bg-transparent pl-[22px] text-[14px] outline-none"><option>Medium</option></select>
              <Down className="pointer-events-none absolute right-[34px] text-[#808285]" />
              <Svg w={10} h={11} className="absolute right-[8px] text-[#808285]"><path d="M0 0h10v2H0zM0 4h10v3H0zM0 9h10v2H0z" /></Svg>
            </label>
          </div>
          <button aria-label="Scroll left" className="ml-[9px] text-[#76787b]"><Left /></button>
          <div className="ml-auto flex items-center text-[#76787b]">
            <button aria-label="Scroll right" className="mr-[14px]"><Right /></button>
            <Svg w={12} h={9}><path d="M0 9h12L6 0z" /></Svg>
            <div className="relative mx-[4px] h-[15px] w-[82px]">
              <Svg w={82} h={15}><path d="M0 0h5v15H0zM6 6h76v3H6z" /></Svg>
              <input type="range" aria-label="Zoom" defaultValue={0} className="absolute inset-0 w-full cursor-pointer opacity-0" />
            </div>
            <Svg w={18} h={12} className="ml-[4px]"><path d="M0 12h18L9 0z" /></Svg>
            <Svg w={18} h={16} className="mr-[2px] ml-[8px]"><path d="M9 0h9v3.500H9zM9 5h9v3.500H9zM1 10h5v2.500H1zM1 13.500h5V16H1z" /></Svg>
          </div>
        </div>
        <div className="pointer-events-none absolute top-0 bottom-[22px] left-[411px] w-px bg-[#c3ccd4]" />
      </div>
    </main>
  );
}

/* ------------------------------------------------------------------ */
/* Mixer                                                               */
/* ------------------------------------------------------------------ */

const sideCell = "grid w-full place-items-center border-b border-[#1d1e20] bg-[#393b3e]";
const instScale: [string, number][] = [["10", 20], ["6", 30], ["0", 48], ["-6", 67], ["-12", 82], ["-24", 101], ["-36", 120], ["-48", 132]];
const mainScale: [string, number][] = [["6", 21], ["-3", 35], ["-9", 47], ["-24", 77], ["-36", 101], ["-48", 125], ["-60", 146]];

function MixerSide() {
  return (
    <div className="flex w-[70px] shrink-0 flex-col bg-[#232427] text-[14px] text-[#c5c6c8]">
      <div className="flex h-[29px] items-center justify-between bg-[#43464a] pr-[7px] pl-[10px] text-[#b9bbbd]">
        <button aria-label="Close mixer"><Svg w={12} h={12}><path d="M1 1l10 10M11 1 1 11" stroke="currentColor" strokeWidth="3" /></Svg></button>
        <button aria-label="Detach mixer"><Svg w={13} h={13}><path d="M3 0h10v10L9.500 7 3 13 0 10l6-6.500z" /></Svg></button>
      </div>
      <div className="mt-px flex h-[27px] border-b border-[#1d1e20] bg-[#393b3e] pt-px">
        <button className="w-[50px] border-r border-[#1d1e20]">I/O</button>
        <button aria-label="I/O menu" className="grid flex-1 place-items-center text-[#d5d6d7]"><Down /></button>
      </div>
      <button aria-label="Mixer options" className={`h-[27px] text-[#b9bbbd] ${sideCell}`}><Wrench className="h-[13px] w-[14px]" /></button>
      <div className="flex-1" />
      <button aria-label="Expand height" className={`h-[33px] ${sideCell}`}><Svg w={12} h={22}><path d="M0 9h12L6 0zM0 13h12l-6 9z" /></Svg></button>
      <button aria-label="Narrow" className={`h-[32px] ${sideCell}`}><Svg w={24} h={12}><path d="M0 0v12l10-6zM24 0v12L14 6z" /></Svg></button>
      {["Inputs", "Outputs", "External", "Instr."].map((t) => (
        <button key={t} className={`h-[27px] pt-px ${sideCell}`}>{t}</button>
      ))}
      <button aria-label="Instruments" className={`h-[28px] text-[#a0a2a4] ${sideCell}`}>
        <Svg w={22} h={17}>
          <path d="M.700 5.500h15v11h-15zM4 6v10M7 6v10M10 6v10M13 6v10M3 3h15.500v11M6 .700h15v11" fill="none" stroke="currentColor" strokeWidth="1.500" />
        </Svg>
      </button>
      <button aria-label="Groups" className={`h-[27px] text-[#a0a2a4] ${sideCell}`}><People /></button>
      <button aria-label="Channel list" className="grid h-[28px] place-items-center bg-[#2982c2] text-white"><Lines /></button>
    </div>
  );
}

const channels = [
  { no: 1, name: "Inst", row: "h-[25px] bg-[#26272a]", color: "bg-[#0561e0]" },
  { no: 2, name: "Vox", row: "h-[25px] bg-[#484a52]", color: "bg-[#009edb]" },
];

function ChannelList() {
  const tab = "grid w-[29px] shrink-0 place-items-center border-r border-[#232427] bg-[#303236] text-[#6d6f72] font-bold";
  return (
    <div className="ml-px flex w-[246px] shrink-0 flex-col bg-[#27282b] text-[14px] text-[#c7c8ca]">
      <table className="w-full table-fixed border-collapse">
        <thead>
          <tr className="h-[29px] bg-[#43464a] text-left">
            <th className="w-[41px]" /><th className="w-[46px]" /><th className="w-[19px]" />
            <th className="border-r border-[#1d1e20] font-normal">Channel</th>
            <th className="w-[55px] pl-[5px] font-normal">Group</th>
          </tr>
        </thead>
        <tbody>
          {channels.map((c) => (
            <tr key={c.no} className={c.row}>
              <td className="text-right">{c.no}</td>
              <td>
                <div className="flex items-center text-[#e2e3e4]">
                  <span className="ml-[5px] h-[22px] w-[7px] shrink-0 border-x border-[#1c1d1f] bg-[#33353a]" />
                  <Svg w={8} h={8} className="ml-[7px]"><circle cx="4" cy="4" r="4" /></Svg>
                  <span className="ml-[7px] shrink-0"><Sine /></span>
                </div>
              </td>
              <td className="pl-[9px]"><div className={`h-[22px] w-[8px] ${c.color}`} /></td>
              <td className="pt-px pl-[14px]">{c.name}</td>
              <td />
            </tr>
          ))}
        </tbody>
      </table>
      <div className="mx-[6px] mt-auto mb-[7px] flex h-[26px] items-center rounded-[4px] border border-[#46484b] bg-[#212225] pr-[7px]">
        <input aria-label="Filter" placeholder="Filter" className="w-full min-w-0 bg-transparent pr-[7px] text-center outline-none placeholder:text-[#75777a]" />
        <button aria-label="Clear filter" className="text-[#a9abad]"><Svg w={9} h={9}><path d="M1 1l7 7M8 1 1 8" stroke="currentColor" strokeWidth="2" /></Svg></button>
      </div>
      <div className="flex h-[28px] text-[12px]">
        <button aria-label="Audio" className="grid w-[29px] shrink-0 place-items-center bg-[#2982c2] text-white"><WaveIcon className="h-[12px] w-[16px]" /></button>
        <button aria-label="Keys" className={tab}><Svg w={13} h={9}><path d="M0 0h2v6h1.500V0h2v6H7V0h2v6h1.500V0H13v9H0z" /></Svg></button>
        <button className={tab}>FX</button>
        <button aria-label="Bus" className={tab}><Svg w={14} h={10}><path d="M0 0h7v4h7v2H7v4H0V8h5V6H0V4h5V2H0z" /></Svg></button>
        <button aria-label="VCA" className={tab}><Svg w={14} h={12}><path d="M3 0h1v5h2.500L5 8v4H3V8L.500 5H3zM10 12h1V7h2.500V2L11 0 9 0v7h1z" /></Svg></button>
        <button className={tab}>AUX</button>
        <button className="ml-[5px] flex-1 bg-[#3a3c3f] pt-px text-[14px]">Remote</button>
      </div>
    </div>
  );
}

const FaderCap = ({ x, blue = false }: { x: number; blue?: boolean }) => {
  const id = blue ? "capBlue" : "capWhite";
  return (
    <>
      <defs>
        <linearGradient id={id} x1="0" y1="0" x2="0" y2="1">
          <stop offset="0" stopColor={blue ? "#4fb0dc" : "#fafafa"} /><stop offset="0.12" stopColor={blue ? "#3c86ab" : "#b4b4b4"} />
          <stop offset="0.5" stopColor={blue ? "#58a8cf" : "#f8f8f8"} /><stop offset="0.88" stopColor={blue ? "#58aed8" : "#ffffff"} />
          <stop offset="1" stopColor={blue ? "#3a7f9f" : "#9d9d9d"} />
        </linearGradient>
      </defs>
      <rect x={x - 11.5} y="24.500" width="23" height="46" rx="3" fill={blue ? "#12384c" : "#4c4c4e"} />
      <rect x={x - 10} y="25.500" width="20" height="44" rx="2" fill={`url(#${id})`} />
      <path d={`M${x - 9} 48.500h18`} stroke={blue ? "#6f625e" : "#4a4a4a"} />
      <path d={`M${x - 8} 29.500h16M${x - 8} 66.500h16`} stroke={blue ? "#2b6585" : "#909090"} />
    </>
  );
};

type DeskProps = { rail: string; light: string; top: string; active?: boolean };

function FaderDesk({ rail, light, top, active = false }: DeskProps) {
  return (
    <div className="relative mt-[11px] h-[152px] w-full">
      <svg viewBox="0 0 101 152" className="h-full w-[101px]" fill={light} aria-hidden="true">
        <rect x="20" width="16" height="15" fill={top} /><rect x="20" y="15" width="16" height="136" fill="#212528" />
        {[19, 31, 67, 82, 101, 120, 132, 142].map((y) => <path key={y} d={`M22 ${y}.500h12`} stroke="#1d4257" />)}
        <path d="M22 48.500h12" stroke="#909497" />
        {instScale.map(([t, y]) => (
          <text key={t} x="18" y={y + 3} textAnchor="end" fontSize="10" fontWeight="700" fill="#c3ccd6">{t}</text>
        ))}
        <rect x="41" y="60" width="18" height="91" fill={rail} />
        {[76, 89, 104, 114, 122].map((y) => <path key={y} d={`M42 ${y}.500h16`} stroke={light} strokeOpacity="0.5" />)}
        <rect x="49" y="20" width="2" height="110" fill="#15181b" />
        <FaderCap x={50} />
        <path d="M72 0h16v4H72z" fill={active ? "#5ebdf2" : "#4c4f54"} />
        <path d="M72 5h16v4H72zM72 10h16v5H72z" fill="#4c4f54" />
        <path d="M72 95h8v14h-8z" /><path d="M81 95h8v14h-8z" opacity={active ? 1 : 0.45} />
        <circle cx="81" cy="136" r="8" /><path d="M74.500 129.500l7 7" stroke="#26303c" strokeWidth="2.800" />
      </svg>
      <input type="range" aria-label="Volume" defaultValue={78} className="absolute top-0 left-[38px] h-full w-[24px] opacity-0 [writing-mode:vertical-lr]" />
    </div>
  );
}

const stripStyles = {
  inst: { top: "bg-[#0561e0]", body: "bg-[#1f3553]", text: "text-[#b9bec6]", in: "bg-[#38435a]", out: "bg-[#434e63]", btn: "bg-[#27364d]", auto: "bg-[#172233] text-[#6f7a8b]", width: "w-[101px]" },
  vox: { top: "bg-[#009edb]", body: "bg-[#237c9e]", text: "text-[#e4eef2]", in: "bg-[#406f83]", out: "bg-[#376a7e]", btn: "bg-[#28657d]", auto: "bg-[#193f4e] text-[#6b98a9]", width: "w-[102px]" },
};

function Strip({ no, input, kind }: { no: number; input: string; kind: "inst" | "vox" }) {
  const s = stripStyles[kind];
  return (
    <div className={`flex flex-1 flex-col ${s.width} ${s.body} ${s.text} text-[14px]`}>
      <div className="mx-[6px] mt-[6px] border-t border-[#152335]">
        <button className={`block h-[21px] w-full leading-[25px] ${s.in}`}>{input}</button>
        <button className={`block h-[22px] w-full leading-[24px] ${s.out}`}>Main</button>
        <div className="h-[22px] bg-[#23272a] pt-px"><div className="mx-auto h-[20px] w-[4px] bg-[#2a9cf0]" /></div>
      </div>
      <div className="mx-[6px] mt-[2px] flex h-[22px] leading-[22px] [&>*]:flex-1">
        <button>0dB</button><button className="border-l border-[#17486033]">&lt;C&gt;</button>
      </div>
      <div className={`mx-[7px] mt-[3px] grid h-[52px] grid-cols-2 grid-rows-2 border border-[#11202f] text-[16px] [&>*]:grid [&>*]:place-items-center [&>*:nth-child(even)]:border-l [&>*:nth-child(n+3)]:border-t [&>*]:border-[#11202f] ${s.btn}`}>
        <button>M</button><button>S</button>
        <button aria-label="Record"><Svg w={12} h={12}><circle cx="6" cy="6" r="6" /></Svg></button>
        <button aria-label="Monitor"><Mono /></button>
      </div>
      <FaderDesk rail={kind === "inst" ? "#45567a" : "#4d93b0"} light={kind === "inst" ? "#a9b1bd" : "#a9cbd8"} top={kind === "inst" ? "#172a44" : "#1a5a74"} active={kind === "vox"} />
      <div className="mt-[5px] mr-[10px] flex h-[18px] items-center justify-between pl-[16px] text-[14px] font-bold text-white">
        {no}<WaveIcon className={s.text} />
      </div>
      <button className={`mx-[6px] mt-[5px] h-[20px] leading-[20px] ${s.auto}`}>Auto: Off</button>
    </div>
  );
}

const inserts = ["RX 9 De-plosive", "RX 9 Breath Con..", "RX 9 Mouth De-c.."];

function Inserts() {
  const head = "flex h-[25px] items-center bg-[#3c3f43] pr-[5px] pl-[4px]";
  return (
    <div className="ml-[2px] flex w-[129px] flex-col bg-[#237c9e] text-[14px] text-[#c2c4c6]">
      <div className={`pt-px ${head}`}>
        <Power className="text-[#2a8fe6]" /><span className="ml-[4px] flex-1">Inserts</span>
        <Down className="mr-[6px] text-[#8b8d90]" /><Plus className="text-[#9b9da0]" />
      </div>
      {inserts.map((t) => (
        <div key={t} className="relative flex h-[26px] items-center border-t border-[#3e4246] bg-[#55585c] pt-px pl-[4px] text-[13px] whitespace-nowrap last-of-type:border-t">
          <Down className="absolute right-[5px] text-[#6b6e72]" />
          <Power className="text-[#52b0f0]" /><span className="relative ml-[4px]">{t}</span>
        </div>
      ))}
      <div className="flex-1" />
      <div className={`border-t border-[#17181a] ${head}`}>
        <Power className="text-[#77797c]" /><span className="ml-[4px] flex-1">Sends</span>
        <Down className="mr-[6px] text-[#8b8d90]" /><Plus className="text-[#9b9da0]" />
      </div>
      <div className="h-[37px]" />
    </div>
  );
}

function MainStrip() {
  return (
    <div className="flex w-[101px] shrink-0 flex-col bg-[#2c2f33] text-[14px] text-[#d3d4d5]">
      <div className="h-[4px] bg-[#3a3e42]" />
      <div className="mx-[6px] mt-[7px] border-t border-[#1b1c1e]">
        <div className="h-[21px] bg-[#2f3236]" />
        <button className="block h-[22px] w-full bg-[#47494b] leading-[24px]">Front L/R +</button>
        <div className="grid h-[22px] grid-cols-2 bg-[#202325] text-center text-[13px] leading-[22px] text-[#3f8db8]"><span>-∞</span><span className="border-l border-[#2c2f33]">-∞</span></div>
      </div>
      <div className="mx-[6px] mt-[2px] grid h-[22px] grid-cols-2 leading-[22px]">
        <button className="text-white">0dB</button><span className="text-center text-[#5d6063]">0</span>
      </div>
      <div className="mx-[8px] mt-[3px] h-[52px] border border-[#18191b] bg-[#34373b] text-[16px]">
        <div className="grid h-[25px] grid-cols-2"><button>M</button><button className="border-l border-[#18191b]">S</button></div>
        <div className="flex h-[25px] border-t border-[#18191b] text-[#b6b7b9] [&>*]:grid [&>*]:place-items-center">
          <button aria-label="Metronome" className="w-[32px] bg-[#4f87a5] text-white"><Metro line="#4f87a5" /></button>
          <button aria-label="Listen bus" className="w-[20px] border-l border-[#18191b]"><Svg w={8} h={14}><path d="M3 0h2v3h3v3H0V3h3zM0 7h8v4H5v3H3v-3H0z" /></Svg></button>
          <button aria-label="Stereo" className="flex-1 border-l border-[#18191b]"><Stereo className="text-[#a3a5a7]" /></button>
        </div>
      </div>
      <div className="relative mt-[11px] h-[152px]">
        <svg viewBox="0 0 101 152" className="h-full w-full" fill="#a5a7a9" aria-hidden="true">
          <path d="M12 0h14v4H12z" fill="#5ebdf2" /><path d="M12 5h14v4H12zM12 10h6v5h-6zM19 10h7v5h-7z" fill="#4c4f53" />
          <path d="M12 95h8v14h-8z" /><path d="M21 95h8v14h-8z" fill="#63666a" />
          <circle cx="22" cy="136" r="8" /><path d="M15.500 129.500l7 7" stroke="#26292c" strokeWidth="2.800" />
          <rect x="41" y="60" width="18" height="91" fill="#5b5d61" />
          {[76, 89, 104, 114, 122].map((y) => <path key={y} d={`M42 ${y}.500h16`} stroke="#909396" />)}
          <rect x="49" y="20" width="2" height="110" fill="#15181b" />
          <FaderCap x={50} blue />
          <rect x="64" y="15" width="16" height="136" fill="#212528" />
          {[18, 42, 53, 76, 99, 122, 146].map((y) => <path key={y} d={`M66 ${y}.500h12`} stroke="#1f5070" />)}
          <path d="M66 29.500h12" stroke="#8a8d90" />
          {mainScale.map(([t, y]) => <text key={t} x="98" y={y + 3} textAnchor="end" fontSize="10" fontWeight="700" fill="#b9bbbd">{t}</text>)}
        </svg>
        <input type="range" aria-label="Main volume" defaultValue={78} className="absolute top-0 left-[38px] h-full w-[24px] opacity-0 [writing-mode:vertical-lr]" />
      </div>
      <button className="mx-[6px] mt-[28px] h-[20px] bg-[#1d1e20] leading-[20px] text-[#6f7174]">Auto: Off</button>
      <div className="mt-[8px] h-[17px] bg-[#1c1d1f] text-center leading-[18px] text-white">Main</div>
      <div className="flex-1 bg-[#2a2c2f]" />
    </div>
  );
}

function Mixer() {
  return (
    <section aria-label="Console" className="mt-[3px] mb-[5px] flex h-[415px] shrink-0 bg-black px-[4px]">
      <MixerSide />
      <ChannelList />
      <div className="ml-[3px] flex min-w-0 flex-1 flex-col bg-[#27282b]">
        <div className="flex flex-1">
          <div className="flex flex-col bg-[#17181a] pr-[2px]">
            <div className={`h-[5px] border-b border-[#17181a] ${stripStyles.inst.top}`} />
            <Strip no={1} input="Input L+R" kind="inst" />
            <div className="mt-[2px] h-[17px] bg-[#0561e0] text-center text-[14px] leading-[18px] text-[#e6ecf5]">Inst</div>
          </div>
          <div className="flex flex-col bg-[#17181a] pr-[2px]">
            <div className={`h-[5px] border-b border-[#17181a] ${stripStyles.vox.top}`} />
            <div className="flex flex-1"><Strip no={2} input="Input L" kind="vox" /><Inserts /></div>
            <div className="mt-[2px] h-[17px] bg-[#009edb] text-center text-[14px] leading-[18px] text-[#e6f4fa]">Vox</div>
          </div>
        </div>
        <div className="flex h-[23px] items-center justify-between pr-[10px] pl-[9px] text-[#76787b]">
          <button aria-label="Scroll channels left"><Left /></button><button aria-label="Scroll channels right"><Right /></button>
        </div>
      </div>
      <div className="w-px bg-[#17181a]" />
      <MainStrip />
    </section>
  );
}

/* ------------------------------------------------------------------ */
/* Transport                                                           */
/* ------------------------------------------------------------------ */

const Cell = ({ label, className, children }: { label: string; className: string; children: React.ReactNode }) => (
  <div className={`flex shrink-0 flex-col items-center ${className}`}>
    <div className="flex h-[24px] items-center text-[16px] text-[#dedfe0]">{children}</div>
    <span className="text-[14px] leading-[18px] whitespace-nowrap">{label}</span>
  </div>
);

function Transport() {
  return (
    <footer className="flex h-[61px] shrink-0 border-b-2 border-[#8b8d8f] bg-linear-to-b from-[#5f656c] from-85% to-[#33363b]">
      <div className="flex h-[52px] flex-1 items-start bg-[#161616] pt-[6px] pl-[88px] text-[#95979a] [clip-path:polygon(19px_0,calc(100%_-_12px)_0,calc(100%_-_28px)_100%,30px_100%)]">
        <Cell label="MIDI" className="w-[36px]">
          <Svg w={34} h={20} className="text-[#606366]">
            <path d="M0 5l5 5-5 5zM29 5l5 5-5 5z" /><circle cx="17" cy="10" r="8" fill="none" stroke="currentColor" strokeWidth="1.500" />
            <circle cx="12" cy="10" r="1.500" /><circle cx="22" cy="10" r="1.500" /><circle cx="13.500" cy="6" r="1.500" /><circle cx="20.500" cy="6" r="1.500" /><circle cx="17" cy="14.500" r="1.500" />
          </Svg>
        </Cell>
        <Cell label="Performance" className="ml-[13px] w-[82px]">
          <div className="mt-px flex w-[82px] flex-col gap-[2px]">
            <div className="h-[7px] bg-[#30333a]"><div className="h-full w-[6px] bg-[#55aede]" /></div>
            <div className="h-[7px] bg-[#30333a]" />
          </div>
        </Cell>
        <Svg w={30} h={30} className="mt-[5px] ml-[19px] text-[#b4b6b8]">
          <circle cx="15" cy="15" r="13" fill="none" stroke="currentColor" strokeWidth="3" strokeLinecap="round" strokeDasharray="0.1 6.700" />
        </Svg>
        <div className="ml-[16px] w-[101px]">
          <div className="h-[24px] text-[16px] leading-[24px] text-[#e2e3e4]">8:19 days</div>
          <div className="text-[14px] leading-[18px]">Record Max</div>
        </div>
        <div className="w-[168px] text-center">
          <div className="h-[25px] text-[24px] leading-[26px] font-bold text-[#d9dadb]">00009.04.02.95</div>
          <button className="flex w-full items-center justify-center text-[14px] leading-[18px]">Bars<Down className="w-[9px]" /></button>
        </div>
        <div className="ml-[24px] flex h-[40px] items-center text-[#c9cacb]">
          <button aria-label="Back"><Svg w={14} h={15}><path d="M14 0v15L0 7.500z" /></Svg></button>
          <button aria-label="Rewind" className="ml-[14px]"><Svg w={24} h={15}><path d="M13 0v15L0 7.500zM24 0v15L11 7.500z" /></Svg></button>
          <button aria-label="Forward" className="ml-[16px]"><Svg w={24} h={15}><path d="M0 0v15l13-7.500zM11 0v15l13-7.500z" /></Svg></button>
          <button aria-label="Next" className="ml-[9px]"><Svg w={14} h={15}><path d="M0 0v15l14-7.500z" /></Svg></button>
          <button aria-label="Return to start" className="ml-[17px]"><Svg w={16} h={16}><path d="M0 0h1.500v16H0zM16 0v15L2 7.500z" /></Svg></button>
          <button aria-label="Stop" className="ml-[25px] size-[26px] bg-[#2eaed7]" />
          <button aria-label="Play" className="ml-[22px]"><Svg w={22} h={25}><path d="M0 0v25l22-12.500z" /></Svg></button>
          <button aria-label="Record" className="ml-[17px] size-[26px] rounded-full bg-[#c4c5c6]" />
          <button aria-label="Loop" className="ml-[20px] text-[#9d9fa1]">
            <Svg w={40} h={27}>
              <path d="M12 25C4 25 1.500 19 1.500 13 1.500 5 6 2 12 2h16c6 0 10.500 3 10.500 11 0 6-2 12-10 12h-5l4-9.500M11.500 25l4-9.500" fill="none" stroke="currentColor" strokeWidth="2.800" />
            </Svg>
          </button>
        </div>
        <div className="mt-px ml-[24px] w-[154px] text-[16px] leading-[19px] text-[#dcdddd]">
          <div className="flex"><span className="w-[18px] text-[#4b82a8]">L</span>00001.01.01.00</div>
          <div className="flex"><span className="w-[18px] text-[#4b82a8]">R</span>00001.01.01.00</div>
        </div>
        <Cell label="Sync" className="w-[48px]">Off</Cell>
        <div className="mt-[3px] ml-[7px] grid h-[38px] w-[62px] grid-cols-2 grid-rows-2 place-items-center text-[#97999b]">
          <Svg w={20} h={10}><path d="M0 1h4l5 6h11M0 7c4 0 4-5 8-5" fill="none" stroke="currentColor" strokeWidth="1.500" /></Svg>
          <Svg w={18} h={12}><path d="M0 0h1.500v12H0zM3 5h2v2H3zM6 0h2v3h9v6H8v3H6z" /></Svg>
          <Svg w={14} h={14}>
            <circle cx="7" cy="7" r="3.600" fill="none" stroke="currentColor" strokeWidth="2.400" />
            <path d="M7 0v3M7 11v3M0 7h3M11 7h3M2 2l2.200 2.200M9.800 9.800 12 12M12 2 9.800 4.200M4.200 9.800 2 12" stroke="currentColor" strokeWidth="2" />
          </Svg>
          <Svg w={22} h={12}><path d="M0 6h2v1.500H0zM3 6h2v1.500H3zM6 0h2v3h7V0h2v12h-2V9H8v3H6zM18 6h2v1.500h-2z" /></Svg>
        </div>
        <Cell label="Metronome" className="ml-[9px] w-[72px]">
          <div className="flex items-center gap-[12px] pl-px text-[#97999b]">
            <Svg w={12} h={12} className="text-[#70787a]"><circle cx="6" cy="6" r="6" /></Svg>
            <Wrench className="h-[12px] w-[13px]" /><Metro />
          </div>
        </Cell>
        <Cell label="Timing" className="ml-[15px] w-[52px]">4 /4</Cell>
        <Cell label="Key" className="ml-[16px] w-[28px]">-</Cell>
        <Cell label="Tempo" className="ml-[19px] w-[50px]">120.00</Cell>
        <div className="mt-[4px] ml-[21px] w-[112px]">
          <div className="flex flex-col gap-px">
            <div className="h-[5px] w-3/4 bg-[#2f3338]" /><div className="h-[5px] w-3/4 bg-[#2f3338]" />
          </div>
          <div className="mt-[9px] flex items-center justify-between">
            <Svg w={84} h={11}>
              <path d="M0 5.500h63" stroke="#4b9cc6" strokeWidth="11" strokeDasharray="1.500 0.900" />
              <path d="M64 5.500h20" stroke="#3a3d41" strokeWidth="11" strokeDasharray="1.500 1" /><path fill="#c5d3da" d="M61 0h2v11h-2z" />
            </Svg>
            <Stereo className="text-[#52b6de]" />
          </div>
        </div>
      </div>
      <div className="flex shrink-0 text-[15px] text-[#dcdee0] [&>button]:border-l [&>button]:border-[#474c52] [&>button]:pt-[3px]">
        <button className="w-[71px]">Edit</button>
        <button className="w-[69px] bg-[#3692d2] text-white">Mix</button>
        <button className="w-[83px]">Browse</button>
      </div>
    </footer>
  );
}

export default function App() {
  return (
    <div className="relative flex min-h-screen flex-col bg-black font-['Liberation_Sans',Arial,sans-serif]">
      <TitleBar />
      <Toolbar />
      <Arrangement />
      <Mixer />
      <Transport />
      <Svg w={14} h={24} className="pointer-events-none absolute top-[136px] left-[1550px]">
        <path d="M1 1v19l4-4 3.500 7 3-1.500L8 15h5.500z" fill="#fff" stroke="#000" />
      </Svg>
    </div>
  );
}
